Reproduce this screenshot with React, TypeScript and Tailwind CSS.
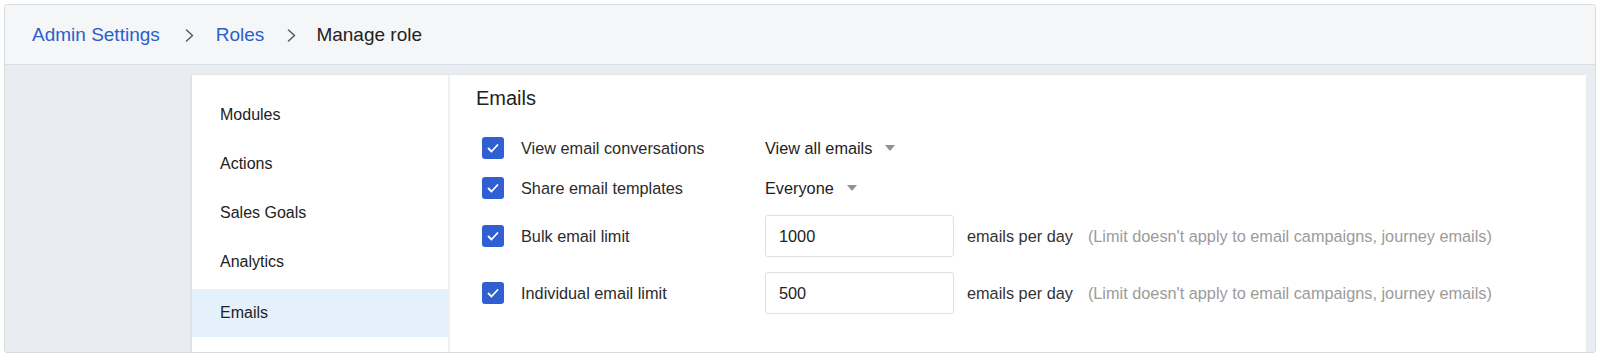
import React from "react";

const font = { fontFamily: '"Liberation Sans", Arial, Helvetica, sans-serif' };

function Chevron() {
  return (
    <svg width="9" height="13" viewBox="0 0 9 13" className="shrink-0">
      <polyline points="1.5,1 7.5,6.5 1.5,12" fill="none" stroke="#555a60" strokeWidth="1.5" strokeLinecap="round" strokeLinejoin="round" />
    </svg>
  );
}

function Check() {
  return (
    <div className="w-[22px] h-[22px] rounded-[3px] bg-[#2f5fd0] flex items-center justify-center shrink-0">
      <svg width="22" height="22" viewBox="0 0 22 22">
        <polyline points="6.5,11.5 9.5,14.5 15.5,8" fill="none" stroke="#ffffff" strokeWidth="1.8" strokeLinecap="round" strokeLinejoin="round" />
      </svg>
    </div>
  );
}

function Caret() {
  return (
    <svg width="10" height="6" viewBox="0 0 10 6" className="ml-[13px] shrink-0">
      <polygon points="0,0 10,0 5,6" fill="#8e9196" />
    </svg>
  );
}

function Row({ label, children, className = "" }: { label: string; children: React.ReactNode; className?: string }) {
  return (
    <div className={"flex items-center pl-[6px] " + className}>
      <Check />
      <div className="ml-[17px] w-[244px] text-[16.3px] text-[#2b2b2b]">{label}</div>
      {children}
    </div>
  );
}

function LimitInput({ value }: { value: string }) {
  return (
    <>
      <div className="w-[189px] h-[42px] border border-[#dde0e4] rounded-[3px] bg-white flex items-center pl-[13px] text-[16.3px] text-[#222]">
        {value}
      </div>
      <span className="ml-[13px] text-[16.3px] text-[#333]">emails per day</span>
      <span className="ml-[15px] text-[16.3px] text-[#9b9b9b]">(Limit doesn't apply to email campaigns, journey emails)</span>
    </>
  );
}

export default function App() {
  const nav = ["Modules", "Actions", "Sales Goals", "Analytics"];
  return (
    <div className="w-[1600px] h-[357px] bg-white p-[4px]" style={font}>
      <div className="w-full h-full border border-[#d9dcdf] rounded-[3px] overflow-hidden flex flex-col">
        <div className="h-[60px] shrink-0 bg-[#f5f6f8] border-b border-[#d8dde4] flex items-center pl-[27px] pt-[2px]">
          <span className="text-[19px] text-[#2b5fcc]">Admin Settings</span>
          <span className="ml-[25px]"><Chevron /></span>
          <span className="ml-[22px] text-[19px] text-[#2b5fcc]">Roles</span>
          <span className="ml-[23px]"><Chevron /></span>
          <span className="ml-[20px] text-[19px] text-[#222]">Manage role</span>
        </div>
        <div className="flex-1 bg-[#e9ecf0] flex pl-[187px] pr-[9px] pt-[10px] min-h-0">
          <div className="flex-1 bg-white flex shadow-[-1px_0_2px_rgba(0,0,0,0.08)]">
            <div className="w-[258px] shrink-0 border-r-2 border-[#eef0f3] pt-[15px]">
              {nav.map((n) => (
                <div key={n} className="h-[49px] flex items-center pl-[28px] text-[16px] text-[#222]">
                  {n}
                </div>
              ))}
              <div className="mt-[3px] h-[48px] flex items-center pl-[28px] text-[16px] text-[#222] bg-[#e4f0fc]">
                Emails
              </div>
            </div>
            <div className="flex-1 pl-[26px] pt-[11px]">
              <div className="h-[24px] leading-[24px] text-[20px] text-[#222]">Emails</div>
              <Row label="View email conversations" className="mt-[18px] h-[40px]">
                <span className="text-[16.3px] font-medium text-[#222]">View all emails</span>
                <Caret />
              </Row>
              <Row label="Share email templates" className="h-[40px]">
                <span className="text-[16.3px] font-medium text-[#222]">Everyone</span>
                <Caret />
              </Row>
              <Row label="Bulk email limit" className="mt-[7px]">
                <LimitInput value="1000" />
              </Row>
              <Row label="Individual email limit" className="mt-[15px]">
                <LimitInput value="500" />
              </Row>
            </div>
          </div>
        </div>
      </div>
    </div>
  );
}
